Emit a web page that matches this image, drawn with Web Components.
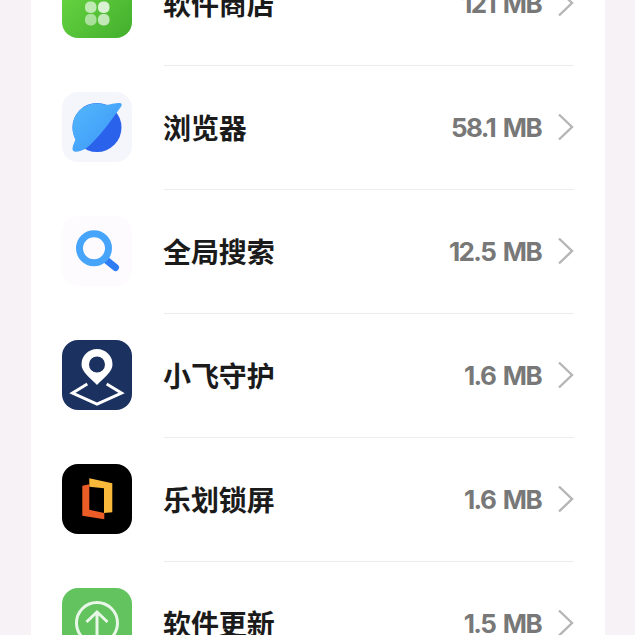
<!DOCTYPE html>
<html lang="zh"><head><meta charset="utf-8">
<style>
html,body{margin:0;padding:0;height:635px;overflow:hidden;background:#f6f2f6}
</style></head><body>
<app-list>
<app-row name="软件商店" size="121 MB"><svg viewBox="0 0 70 70"><defs><linearGradient id="g1" x1="0" y1="0" x2="1" y2="1"><stop offset="0" stop-color="#6fdc45"/><stop offset="1" stop-color="#42ae2d"/></linearGradient></defs><rect width="70" height="70" rx="16" fill="url(#g1)"/><g fill="#fff"><rect opacity=".62" x="23" y="33.500" width="11.500" height="11.500" rx="5" /><rect opacity=".78" x="36" y="33.500" width="11.500" height="11.500" rx="5"/><rect opacity=".5" x="23" y="46" width="11.500" height="11.500" rx="5"/><rect opacity=".65" x="36" y="46" width="11.500" height="11.500" rx="5"/></g></svg></app-row>
<app-row name="浏览器" size="58.1 MB"><svg viewBox="0 0 70 70"><defs><linearGradient id="g2" x1="0" y1="0" x2="1" y2="1"><stop offset="0" stop-color="#54b8fc"/><stop offset="1" stop-color="#3a94f7"/></linearGradient></defs><rect width="70" height="70" rx="16" fill="#f5f6fb"/><circle cx="35" cy="35.500" r="24.500" fill="#2a62ec"/><path d="M44 13C49 12 55 10.500 58 11C60.500 11.500 60 14 58 16C50 27 37 46 24 56.500C20 58.500 15 60.500 12.500 59.500C9.500 58.500 10 55 13.500 47.500A24.500 24.500 0 0 1 44 13z" fill="url(#g2)"/></svg></app-row>
<app-row name="全局搜索" size="12.5 MB"><svg viewBox="0 0 70 70"><rect width="70" height="70" rx="16" fill="#fefbfe"/><path d="M43 43 53.500 51.500" stroke="#2f7df5" stroke-width="7" stroke-linecap="round" fill="none"/><circle cx="32" cy="32.300" r="14.500" fill="none" stroke="#47a4fb" stroke-width="7"/></svg></app-row>
<app-row name="小飞守护" size="1.6 MB"><svg viewBox="0 0 70 70"><rect width="70" height="70" rx="16" fill="#1b3160"/><path fill-rule="evenodd" fill="#fff" d="M35 9a15.500 15.500 0 0 1 15.500 15.500c0 7.500-8.500 13-15.500 20.500C28 37.500 19.500 32 19.500 24.500A15.500 15.500 0 0 1 35 9zm0 7.500a8 8 0 1 0 0 16 8 8 0 0 0 0-16z"/><path d="M25.300 44 10.500 53 35 64l24.500-11L44.700 44" fill="none" stroke="#fff" stroke-width="3"/></svg></app-row>
<app-row name="乐划锁屏" size="1.6 MB"><svg viewBox="0 0 70 70"><rect width="70" height="70" rx="16" fill="#000"/><path fill="#f9b93a" d="M27.300 14.300 50.300 19.300V48.300L42 49V24.300L27.300 22.700z"/><path fill="#ec5c26" d="M20.300 21.700 27.300 20.300V45.700L42.300 49V55.300L20.300 51.700z"/></svg></app-row>
<app-row name="软件更新" size="1.5 MB"><svg viewBox="0 0 70 70"><rect width="70" height="70" rx="16" fill="#62c35f"/><g fill="none" stroke="#e9f7e8" stroke-width="3"><circle cx="35" cy="35" r="20.500"/><path d="M35 58V24M24.500 34 35 24 45.500 34"/></g></svg></app-row>
</app-list>
<script>
class AppList extends HTMLElement{
  constructor(){super();this.attachShadow({mode:'open'}).innerHTML=`<style>
  :host{display:block;box-sizing:border-box;width:574px;margin:-58px 0 0 31px;background:#fff;padding:0 31px;height:760px}
  </style><slot></slot>`;}
}
class AppRow extends HTMLElement{
  constructor(){super();this.attachShadow({mode:'open'}).innerHTML=`<style>
  :host{display:flex;align-items:stretch;height:124px;gap:32px;font-family:"Noto Sans CJK SC","Noto Sans",sans-serif}
  .icon{flex:none;width:70px;align-self:center;height:70px;position:relative;top:-1px}
  ::slotted(svg){display:block;width:70px;height:70px}
  .body{flex:1;display:flex;align-items:center;border-bottom:1px solid #ececee;box-sizing:border-box;min-width:0}
  .name{flex:1;font-size:28px;font-weight:700;color:#1b1b1b;margin-left:-1px;letter-spacing:-.1px;position:relative;top:-1px}
  .size{font-family:Inter,"Liberation Sans",sans-serif;font-size:26px;font-weight:700;color:#787878;letter-spacing:-1.6px;word-spacing:3px}
  svg.chev{flex:none;width:17px;height:28px;margin-left:16px;position:relative;top:-1px}
  </style><div class="icon"><slot></slot></div><div class="body"><span class="name"></span><span class="size"></span>
  <svg class="chev" viewBox="0 0 17 28"><path d="M2 1.500 15 14 2 26.500" fill="none" stroke="#b5b5b5" stroke-width="2.400"/></svg></div>`;}
  connectedCallback(){
    this.shadowRoot.querySelector('.name').textContent=this.getAttribute('name');
    this.shadowRoot.querySelector('.size').textContent=this.getAttribute('size');
  }
}
customElements.define('app-list',AppList);
customElements.define('app-row',AppRow);
</script>
</body></html>
